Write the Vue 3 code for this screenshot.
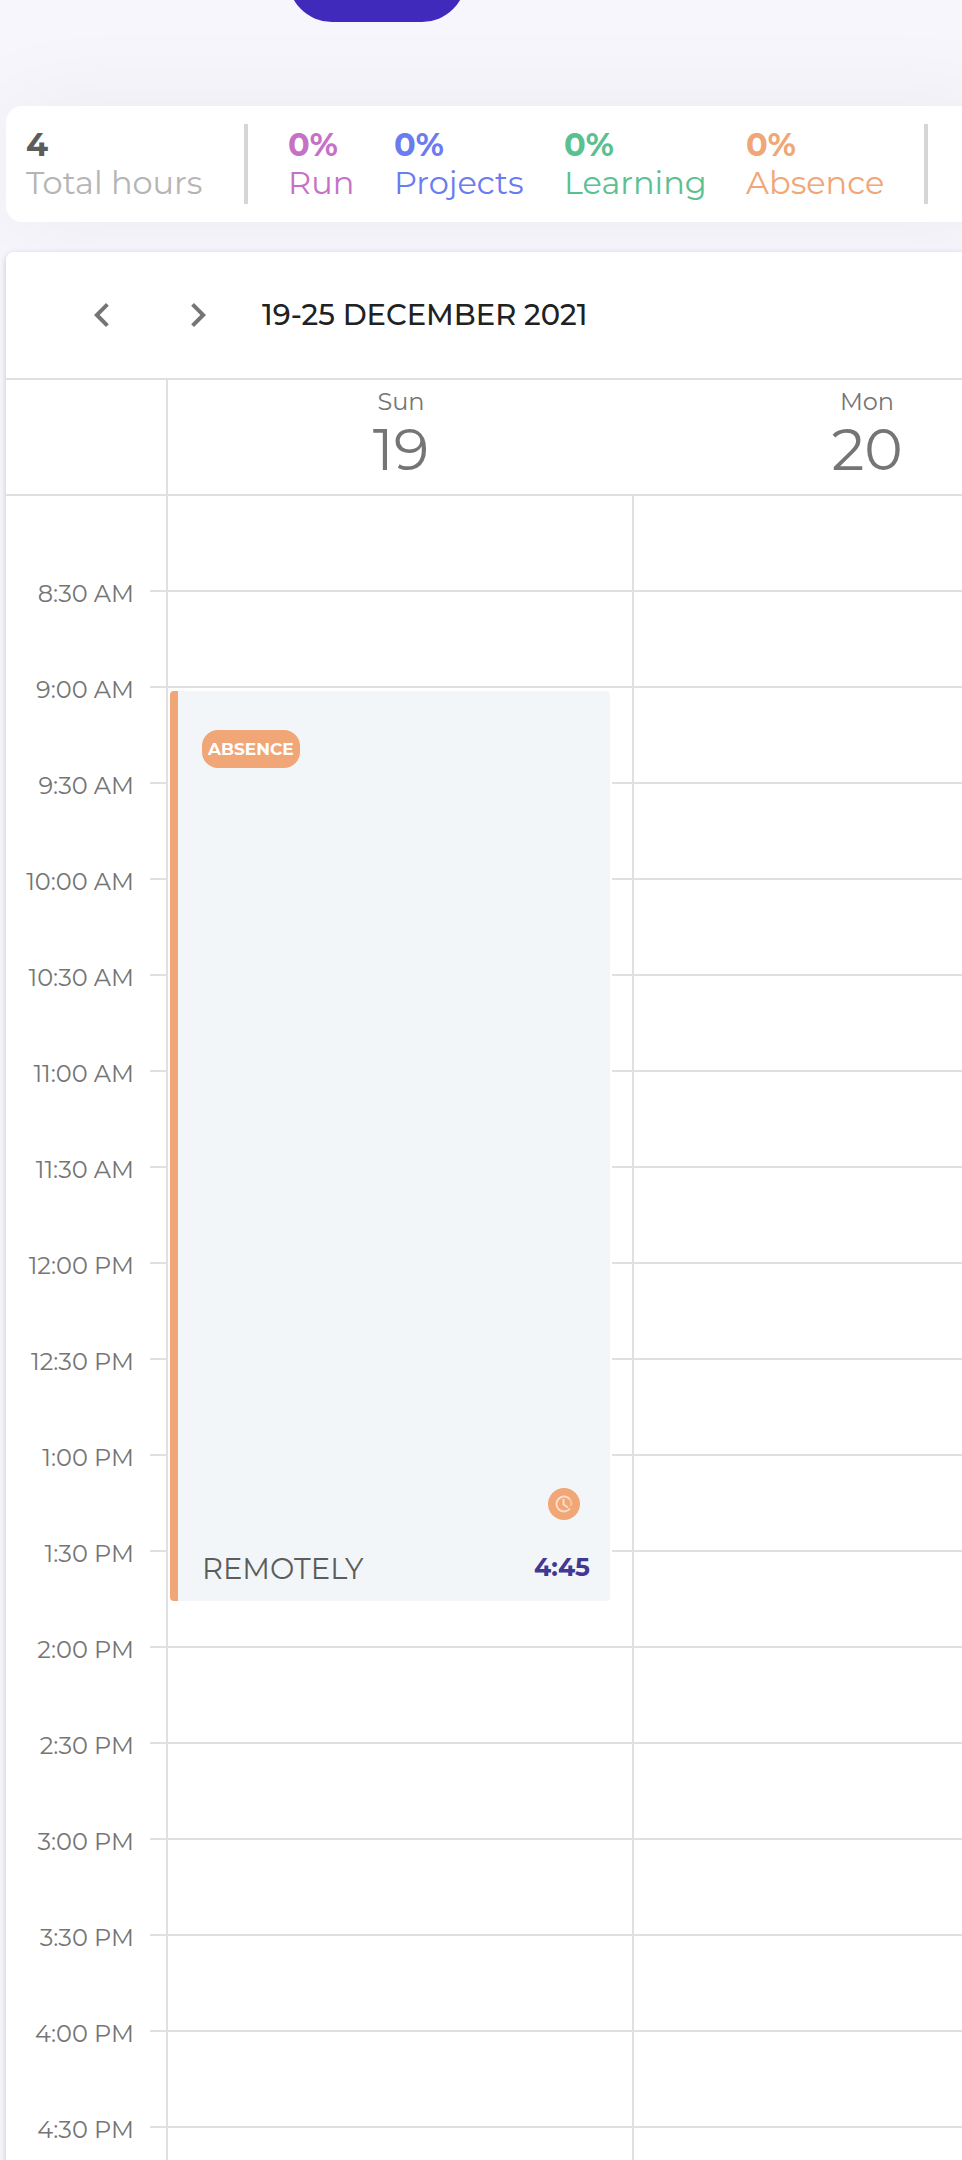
<script setup>
const stats = [
  { value: '0%', label: 'Run', tone: 'run' },
  { value: '0%', label: 'Projects', tone: 'projects' },
  { value: '0%', label: 'Learning', tone: 'learning' },
  { value: '0%', label: 'Absence', tone: 'absence' },
]

const days = [
  { name: 'Sun', date: 19 },
  { name: 'Mon', date: 20 },
]

const times = [
  '8:30 AM', '9:00 AM', '9:30 AM', '10:00 AM', '10:30 AM', '11:00 AM',
  '11:30 AM', '12:00 PM', '12:30 PM', '1:00 PM', '1:30 PM', '2:00 PM',
  '2:30 PM', '3:00 PM', '3:30 PM', '4:00 PM', '4:30 PM',
]
</script>

<template>
  <main class="page">
    <header class="top">
      <button class="top-action" type="button"></button>
    </header>

    <section class="summary">
      <div class="stat total">
        <strong>4</strong>
        <span>Total hours</span>
      </div>
      <i class="divider"></i>
      <div v-for="s in stats" :key="s.label" class="stat" :class="s.tone">
        <strong>{{ s.value }}</strong>
        <span>{{ s.label }}</span>
      </div>
      <i class="divider"></i>
    </section>

    <section class="calendar">
      <div class="toolbar">
        <button class="nav" type="button">
          <svg viewBox="0 0 24 24"><path d="M15.41 7.41L14 6l-6 6 6 6 1.41-1.41L10.83 12z" /></svg>
        </button>
        <button class="nav" type="button">
          <svg viewBox="0 0 24 24"><path d="M10 6L8.59 7.41 13.17 12l-4.58 4.59L10 18l6-6z" /></svg>
        </button>
        <h1>19-25 DECEMBER 2021</h1>
      </div>

      <div class="row head">
        <div class="corner"></div>
        <div v-for="d in days" :key="d.name" class="day-head">
          <span class="day-name">{{ d.name }}</span>
          <span class="day-date">{{ d.date }}</span>
        </div>
      </div>

      <div class="row body">
        <div class="gutter">
          <div v-for="t in times" :key="t" class="slot"><time>{{ t }}</time></div>
          <div class="slot"></div>
        </div>
        <div v-for="d in days" :key="d.name" class="day">
          <div v-for="n in times.length + 1" :key="n" class="slot"></div>
          <article v-if="d.date === 19" class="event">
            <span class="badge">ABSENCE</span>
            <div class="event-foot">
              <span class="place">REMOTELY</span>
              <div class="event-time">
                <svg class="clock" viewBox="0 0 32 32">
                  <circle class="disc" cx="16" cy="16" r="16" />
                  <path class="hand" d="M22 20.5A7.5 7.5 0 1 1 22 11.5" />
                  <path class="hand faint" d="M22 11.5A7.5 7.5 0 0 1 23 18" />
                  <path class="hand" d="M15.5 11V16.5L20 19.5" />
                </svg>
                <strong>4:45</strong>
              </div>
            </div>
          </article>
        </div>
      </div>
    </section>
  </main>
</template>

<style>
body {
  margin: 0;
  background: #f7f6fc;
}
</style>

<style scoped>
.page {
  box-sizing: border-box;
  height: 100vh;
  overflow: hidden;
  padding-left: 6px;
  background: #f7f6fc;
  font-family: Montserrat, Inter, "Open Sans", sans-serif;
  color: #757575;
}

.top {
  display: flex;
  align-items: flex-start;
  height: 106px;
  padding-left: 282px;
}

.top-action {
  width: 178px;
  height: 88px;
  margin: -66px 0 0;
  border: 0;
  border-radius: 44px;
  background: #3f2abb;
}

.summary {
  display: grid;
  grid-template-columns: 178px 4px 66px 130px 142px 138px 4px;
  column-gap: 40px;
  align-items: center;
  box-sizing: border-box;
  height: 116px;
  padding: 0 20px;
  margin-right: -40px;
  border-radius: 16px;
  background: #fff;
  box-shadow: 0 0 100px rgba(0, 0, 0, 0.05);
}

.stat {
  display: flex;
  flex-direction: column;
  font-size: 32px;
  line-height: 38px;
  white-space: nowrap;
}

.stat strong { font-weight: 700; }
.total { color: #b5b5b5; }
.total strong { color: #5c5c5c; }
.run { color: #c671c6; }
.projects { color: #6b7bf0; }
.learning { color: #5bc08f; }
.absence { color: #f0a676; }

.divider {
  height: 80px;
  background: #d6d6d6;
}

.calendar {
  position: relative;
  width: max-content;
  min-width: 100%;
  margin-top: 30px;
  border-radius: 8px;
  background: #fff;
  box-shadow: 0 2px 6px rgba(0, 0, 0, 0.2);
}

.toolbar {
  display: flex;
  align-items: center;
  height: 126px;
  padding-left: 48px;
  border-bottom: 2px solid #e0e0e0;
}

.nav {
  width: 96px;
  height: 96px;
  padding: 24px;
  border: 0;
  background: none;
}

.nav svg {
  display: block;
  width: 48px;
  height: 48px;
  fill: #757575;
}

h1 {
  margin: 0 0 0 16px;
  font-size: 29px;
  font-weight: 500;
  line-height: 40px;
  color: #212121;
}

.row {
  display: grid;
  grid-template-columns: 162px repeat(2, 466px);
}

.head {
  height: 114px;
  border-bottom: 2px solid #e0e0e0;
}

.corner {
  box-sizing: border-box;
  border-right: 2px solid #e0e0e0;
}

.day-head {
  display: flex;
  flex-direction: column;
  align-items: center;
  padding-top: 8px;
}

.day-name {
  font-size: 24px;
  line-height: 28px;
}

.day-date {
  font-size: 58px;
  line-height: 68px;
}

.slot {
  box-sizing: border-box;
  height: 96px;
  border-bottom: 2px solid #e0e0e0;
}

.gutter {
  border-right: 2px solid #e0e0e0;
}

.gutter .slot {
  display: flex;
  align-items: flex-end;
  justify-content: flex-end;
  padding-right: 32px;
  border-bottom: 0;
  background: linear-gradient(#e0e0e0, #e0e0e0) right bottom / 16px 2px no-repeat;
}

time {
  margin-bottom: -16px;
  font-size: 24px;
  line-height: 28px;
}

.day {
  position: relative;
  border-right: 2px solid #e0e0e0;
}

.event {
  position: absolute;
  top: 195px;
  left: 2px;
  right: 22px;
  display: flex;
  flex-direction: column;
  justify-content: space-between;
  box-sizing: border-box;
  height: 910px;
  padding: 39px 20px 18px 24px;
  border-left: 8px solid #f0a676;
  border-radius: 4px;
  background: #f2f6f9;
  box-shadow: 0 0 0 2px #fff;
}

.badge {
  align-self: flex-start;
  padding: 0 6px;
  border-radius: 16px;
  background: #f0a676;
  color: #fff;
  font-size: 17px;
  font-weight: 700;
  line-height: 38px;
}

.event-foot {
  display: flex;
  align-items: flex-end;
  justify-content: space-between;
}

.place {
  font-size: 29px;
  line-height: 28px;
  color: #5c5c5c;
}

.event-time {
  display: flex;
  flex-direction: column;
  align-items: flex-end;
  gap: 31px;
}

.event-time strong {
  font-size: 25px;
  line-height: 32px;
  color: #403893;
}

.clock {
  width: 32px;
  height: 32px;
  margin-right: 10px;
}

.disc { fill: #f0a676; }

.hand {
  fill: none;
  stroke: #fbdcc8;
  stroke-width: 2;
}

.faint { stroke: #f6c4a3; }
</style>
